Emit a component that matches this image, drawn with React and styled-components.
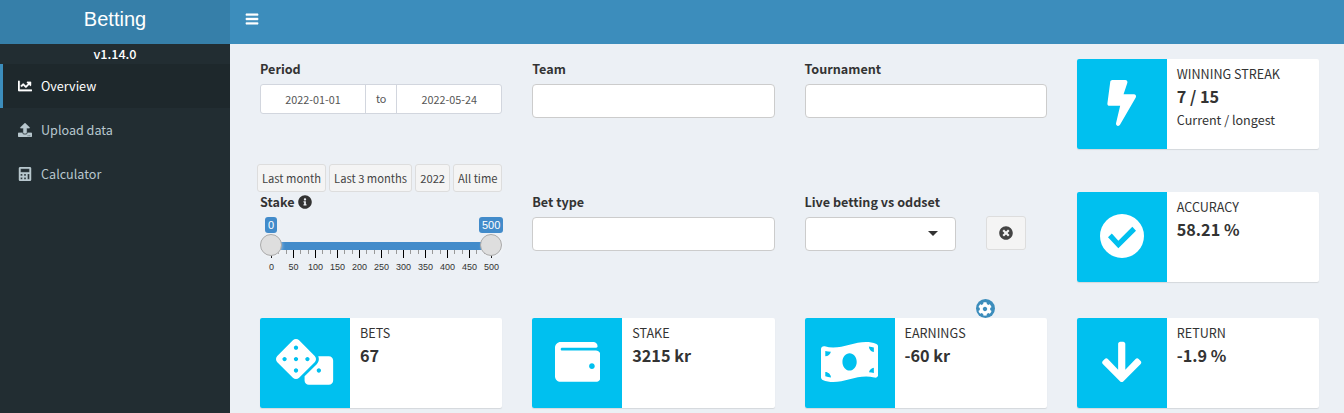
import React from 'react';
import styled, { createGlobalStyle } from 'styled-components';
import {
  FaArrowDown, FaBars, FaBolt, FaCalculator, FaChartLine, FaCog,
  FaDice, FaInfoCircle, FaMoneyBillWave, FaTimesCircle, FaUpload, FaWallet,
} from 'react-icons/fa';

const GlobalStyle = createGlobalStyle`
  * { box-sizing: border-box; }
  body {
    margin: 0;
    background: #ecf0f5;
    color: #333;
    font: 12.6px/20px "Noto Sans CJK JP", "Noto Sans", sans-serif;
    overflow: hidden;
  }
  svg { display: block; }
`;

const Page = styled.div`
  display: grid;
  grid-template: 44px 369px / 230px 1fr;
  height: 413px;
`;
const Logo = styled.div`
  background: #367fa9;
  color: #fff;
  font: 20px/38px "Liberation Sans", Arial, sans-serif;
  text-align: center;
`;
const Navbar = styled.header`
  background: #3c8dbc;
  color: #fff;
  padding: 12px 14.5px;
  svg {
    stroke: currentColor;
    stroke-width: 16px;
  }
`;
const Sidebar = styled.nav`
  background: #222d32;
`;
const Version = styled.div`
  height: 20px;
  color: #fff;
  font-weight: 500;
  text-align: center;
`;
const MenuItem = styled.a`
  display: flex;
  align-items: center;
  height: 44px;
  padding-left: 15px;
  border-left: 3px solid ${p => (p.$active ? '#3c8dbc' : 'transparent')};
  background: ${p => (p.$active ? '#1e282c' : 'transparent')};
  color: ${p => (p.$active ? '#fff' : '#b8c7ce')};
`;
const MenuIcon = styled.span`
  width: 23px;
  font-size: 14px;
  svg {
    stroke: currentColor;
    stroke-width: 8px;
  }
`;
const Content = styled.main`
  display: grid;
  grid-template-columns: repeat(4, minmax(0, 1fr));
  grid-template-rows: 133px 126px 90px;
  column-gap: 30px;
  padding: 15px 25px 0 30px;
`;
const Field = styled.div`
  display: flex;
  flex-direction: column;
`;
const Label = styled.label`
  display: flex;
  align-items: center;
  gap: 4px;
  height: 20px;
  margin-bottom: 5px;
  font-weight: 700;
`;
const Input = styled.div`
  display: flex;
  align-items: center;
  justify-content: flex-end;
  width: ${p => p.$width || '100%'};
  height: 34px;
  padding: 0 17px 2px 0;
  border: 1px solid #ccc;
  border-radius: 4px;
  background: #fff;
`;
const Caret = styled.span`
  border: 5px solid transparent;
  border-top-color: #333;
  border-bottom: 0;
`;
const DateRange = styled.div`
  display: flex;
  height: 30px;
  border: 1px solid #d2d6de;
  border-radius: 3px;
  background: #fff;
  color: #555;
  font-size: 10.8px;
  line-height: 28px;
  text-align: center;
`;
const DateInput = styled.span`
  flex: 1;
`;
const Separator = styled.span`
  width: 32px;
  border: solid #d2d6de;
  border-width: 0 1px;
  line-height: 27px;
`;
const Presets = styled.div`
  display: flex;
  justify-content: space-between;
  margin: 50px 0 0 -3px;
`;
const Preset = styled.button`
  height: 28px;
  padding: 0;
  width: ${p => p.$width}px;
  border: 1px solid #ddd;
  border-radius: 3px;
  background: #f4f4f4;
  color: #444;
  font: 11.2px/24px "Noto Sans CJK JP", sans-serif;
  white-space: nowrap;
`;
const SelectRow = styled.div`
  display: flex;
  gap: 30px;
`;
const ClearButton = styled.button`
  display: flex;
  align-items: center;
  justify-content: center;
  width: 40px;
  height: 34px;
  margin-top: -1px;
  padding: 0;
  border: 1px solid #ddd;
  border-radius: 3px;
  background: #f4f4f4;
  color: #444;
  font-size: 14px;
`;

const Slider = styled.div`
  font-family: "Liberation Sans", Arial, sans-serif;
`;
const Bubbles = styled.div`
  display: flex;
  justify-content: space-between;
  margin: 0 -1px 0 5px;
`;
const Bubble = styled.span`
  height: 16px;
  padding: 0 3px;
  border-radius: 3px;
  background: #428bca;
  color: #fff;
  font-size: 11px;
  line-height: 16px;
`;
const Track = styled.div`
  position: relative;
  height: 8px;
  margin: 9px 11px 0;
  background: #428bca;
`;
const Handle = styled.span`
  position: absolute;
  top: -8px;
  ${p => p.$side}: -11px;
  width: 22px;
  height: 22px;
  border: 1px solid #aaa;
  border-radius: 50%;
  background: #dedede;
  box-shadow: 1px 1px 3px rgba(255, 255, 255, 0.3);
`;
const Ticks = styled.div`
  display: flex;
  justify-content: space-between;
  height: 8px;
  margin: 0 10px 0 11px;
`;
const Tick = styled.span`
  width: 1px;
  height: ${p => (p.$major ? 8 : 4)}px;
  background: ${p => (p.$major ? '#000' : '#999')};
`;
const Scale = styled.div`
  display: grid;
  grid-template-columns: repeat(11, 22px);
  margin: 3px 0 0 0.6px;
  font-size: 9px;
  line-height: 12px;
  text-align: center;
`;

const Card = styled.section`
  position: relative;
  display: flex;
  height: 90px;
  border-radius: 2px;
  background: #fff;
  box-shadow: 0 1px 1px rgba(0, 0, 0, 0.1);
`;
const CardIcon = styled.div`
  display: flex;
  flex: none;
  align-items: center;
  justify-content: center;
  width: 90px;
  padding-bottom: 2px;
  border-radius: 2px 0 0 2px;
  background: #00c0ef;
  color: #fff;
  font-size: 45px;
  svg { width: ${p => (p.$wide ? '1.27em' : '1.01em')}; height: 1.02em; }
  svg.check { width: 44px; height: 44px; }
`;
const CardBody = styled.div`
  padding: 5px 10px;
`;
const CardTitle = styled.div`
  text-transform: uppercase;
`;
const CardValue = styled.div`
  margin-bottom: 2px;
  font-size: 16.2px;
  font-weight: 700;
  line-height: 24px;
`;
const Settings = styled.button`
  position: absolute;
  top: -19px;
  left: 171px;
  display: flex;
  align-items: center;
  justify-content: center;
  width: 19px;
  height: 19px;
  padding: 0;
  border: 0;
  border-radius: 50%;
  background: #3c8dbc;
  color: #fff;
  font-size: 14px;
`;

function CheckBadge() {
  return (
    <svg className="check" viewBox="0 0 132 132" fill="currentColor" fillRule="evenodd">
      <path d="M66 0a66 66 0 1 1 0 132a66 66 0 1 1 0-132zM24 69.500L55 102.500L108 50L97 38.500L55 80L35.500 58.500z" />
    </svg>
  );
}

function InfoCard({ icon: Icon, wide, title, value, note, children }) {
  return (
    <Card>
      <CardIcon $wide={wide}><Icon /></CardIcon>
      <CardBody>
        <CardTitle>{title}</CardTitle>
        <CardValue>{value}</CardValue>
        {note && <div>{note}</div>}
      </CardBody>
      {children}
    </Card>
  );
}

function StakeSlider() {
  return (
    <Slider>
      <Bubbles><Bubble>0</Bubble><Bubble>500</Bubble></Bubbles>
      <Track><Handle $side="left" /><Handle $side="right" /></Track>
      <Ticks>
        {Array.from({ length: 31 }, (_, i) => <Tick key={i} $major={i % 3 === 0} />)}
      </Ticks>
      <Scale>
        {Array.from({ length: 11 }, (_, i) => <span key={i}>{i * 50}</span>)}
      </Scale>
    </Slider>
  );
}

export default function App() {
  return (
    <>
      <GlobalStyle />
      <Page>
        <Logo>Betting</Logo>
        <Navbar><FaBars size={14} /></Navbar>
        <Sidebar>
          <Version>v1.14.0</Version>
          <MenuItem $active><MenuIcon><FaChartLine /></MenuIcon>Overview</MenuItem>
          <MenuItem><MenuIcon><FaUpload /></MenuIcon>Upload data</MenuItem>
          <MenuItem><MenuIcon><FaCalculator /></MenuIcon>Calculator</MenuItem>
        </Sidebar>
        <Content>
          <Field>
            <Label>Period</Label>
            <DateRange>
              <DateInput>2022-01-01</DateInput>
              <Separator>to</Separator>
              <DateInput>2022-05-24</DateInput>
            </DateRange>
            <Presets>
              <Preset $width={69}>Last month</Preset>
              <Preset $width={83}>Last 3 months</Preset>
              <Preset $width={35}>2022</Preset>
              <Preset $width={49}>All time</Preset>
            </Presets>
          </Field>
          <Field><Label>Team</Label><Input /></Field>
          <Field><Label>Tournament</Label><Input /></Field>
          <InfoCard icon={FaBolt} title="Winning streak" value="7 / 15" note="Current / longest" />

          <Field>
            <Label>Stake <FaInfoCircle size={14} /></Label>
            <StakeSlider />
          </Field>
          <Field><Label>Bet type</Label><Input /></Field>
          <Field>
            <Label>Live betting vs oddset</Label>
            <SelectRow>
              <Input $width="151px"><Caret /></Input>
              <ClearButton><FaTimesCircle /></ClearButton>
            </SelectRow>
          </Field>
          <InfoCard icon={CheckBadge} title="Accuracy" value="58.21 %" />

          <InfoCard icon={FaDice} wide title="Bets" value="67" />
          <InfoCard icon={FaWallet} title="Stake" value="3215 kr" />
          <InfoCard icon={FaMoneyBillWave} wide title="Earnings" value="-60 kr">
            <Settings><FaCog /></Settings>
          </InfoCard>
          <InfoCard icon={FaArrowDown} title="Return" value="-1.9 %" />
        </Content>
      </Page>
    </>
  );
}
